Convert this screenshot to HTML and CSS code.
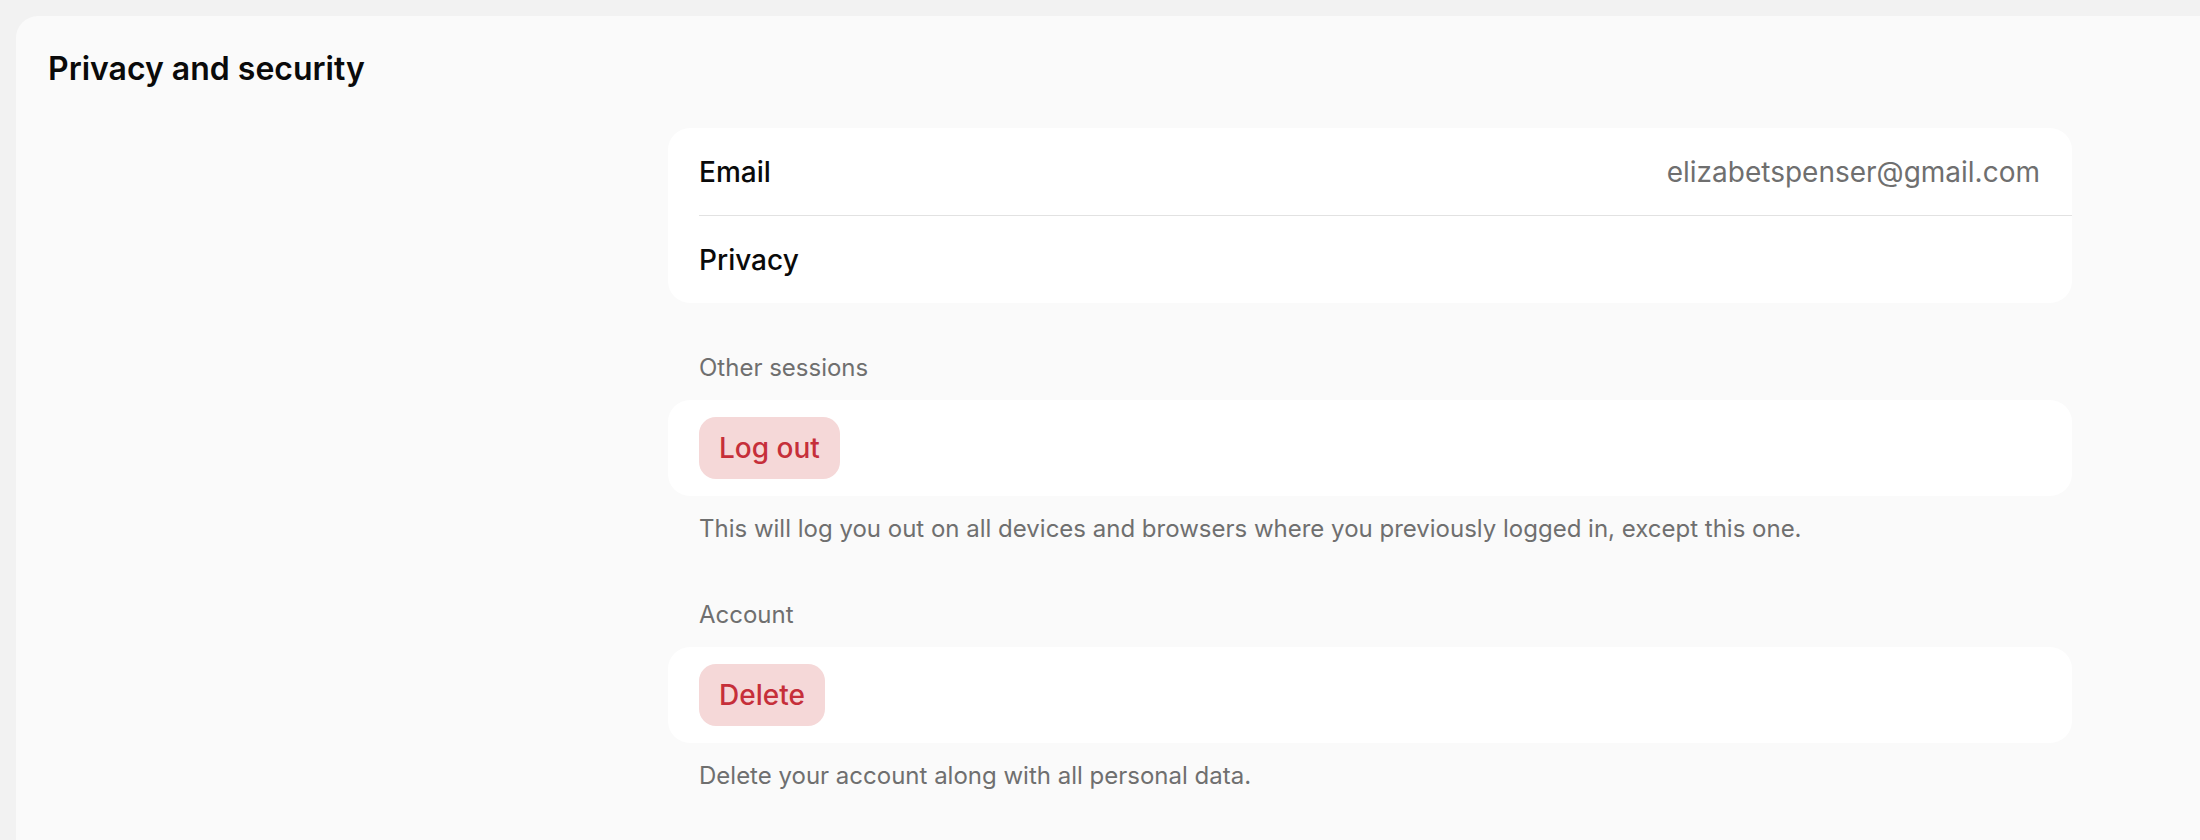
FILE: index.html
```html
<!DOCTYPE html>
<html lang="en">
<head>
    <meta charset="UTF-8">
    <meta name="viewport" content="width=device-width, initial-scale=1.0">
    <title>Privacy and security</title>
    <link rel="stylesheet" href="styles.css">
</head>
<body>
    <div class="panel">
        <h1 class="panel-title">Privacy and security</h1>

        <div class="panel-body">
            <div class="side"></div> <!-- empty left column -->

            <div class="content">
                <div class="card list">
                    <div class="row">
                        <span class="row-label">Email</span>
                        <span class="row-value">elizabetspenser@gmail.com</span>
                    </div>
                    <div class="row">
                        <span class="row-label">Privacy</span>
                    </div>
                </div>

                <div class="section-label">Other sessions</div>
                <div class="card action">
                    <button class="danger-btn">Log out</button>
                </div>
                <div class="hint">This will log you out on all devices and browsers where you previously logged in, except this one.</div>

                <div class="section-label">Account</div>
                <div class="card action">
                    <button class="danger-btn">Delete</button>
                </div>
                <div class="hint">Delete your account along with all personal data.</div>
            </div>
        </div>
    </div>
</body>
</html>
```

FILE: styles.css
```css
html, body {
    height: 100%;
}
body {
    margin: 0;
    padding: 16px 0 0 16px;
    box-sizing: border-box;
    background-color: #f2f2f2;
    font-family: Inter, "Noto Sans", sans-serif;
    color: #111;
    overflow: hidden;
}
.panel {
    min-height: 100%;
    background-color: #fafafa;
    border-top-left-radius: 22px;
    padding: 31px 32px 40px 32px;
    box-sizing: border-box;
}
.panel-title {
    margin: 0;
    font-size: 32px;
    font-weight: 600;
    line-height: 44px;
    color: #0a0a0a;
}
.panel-body {
    display: flex;
    margin-top: 37px;
}
.side {
    width: 620px; /* left column stays empty */
    flex-shrink: 0;
}
.content {
    width: 1404px;
}
.card {
    background-color: #fff;
    border-radius: 22px;
}
.list .row {
    margin-left: 31px;
    padding-right: 32px;
    height: 87px;
    display: flex;
    align-items: center;
    justify-content: space-between;
}
.list .row + .row {
    border-top: 1px solid #e2e2e2;
}
.row-label {
    font-size: 28px;
    font-weight: 500;
    color: #0a0a0a;
}
.row-value {
    font-size: 28px;
    color: #6f6f6f;
}
.section-label {
    margin: 49px 0 16px;
    padding-left: 31px;
    font-size: 24px;
    line-height: 32px;
    color: #6f6f6f;
}
.action {
    padding: 17px 31px;
}
.danger-btn {
    height: 62px;
    padding: 0 20px;
    border: none;
    border-radius: 17px;
    background-color: #f5d8d8;
    color: #c62f3a;
    font-family: inherit;
    font-size: 28px;
    font-weight: 500;
}
.hint {
    margin-top: 17px;
    padding-left: 31px;
    font-size: 24px;
    line-height: 32px;
    color: #6f6f6f;
}
.hint + .section-label {
    margin-top: 54px;
}
```
